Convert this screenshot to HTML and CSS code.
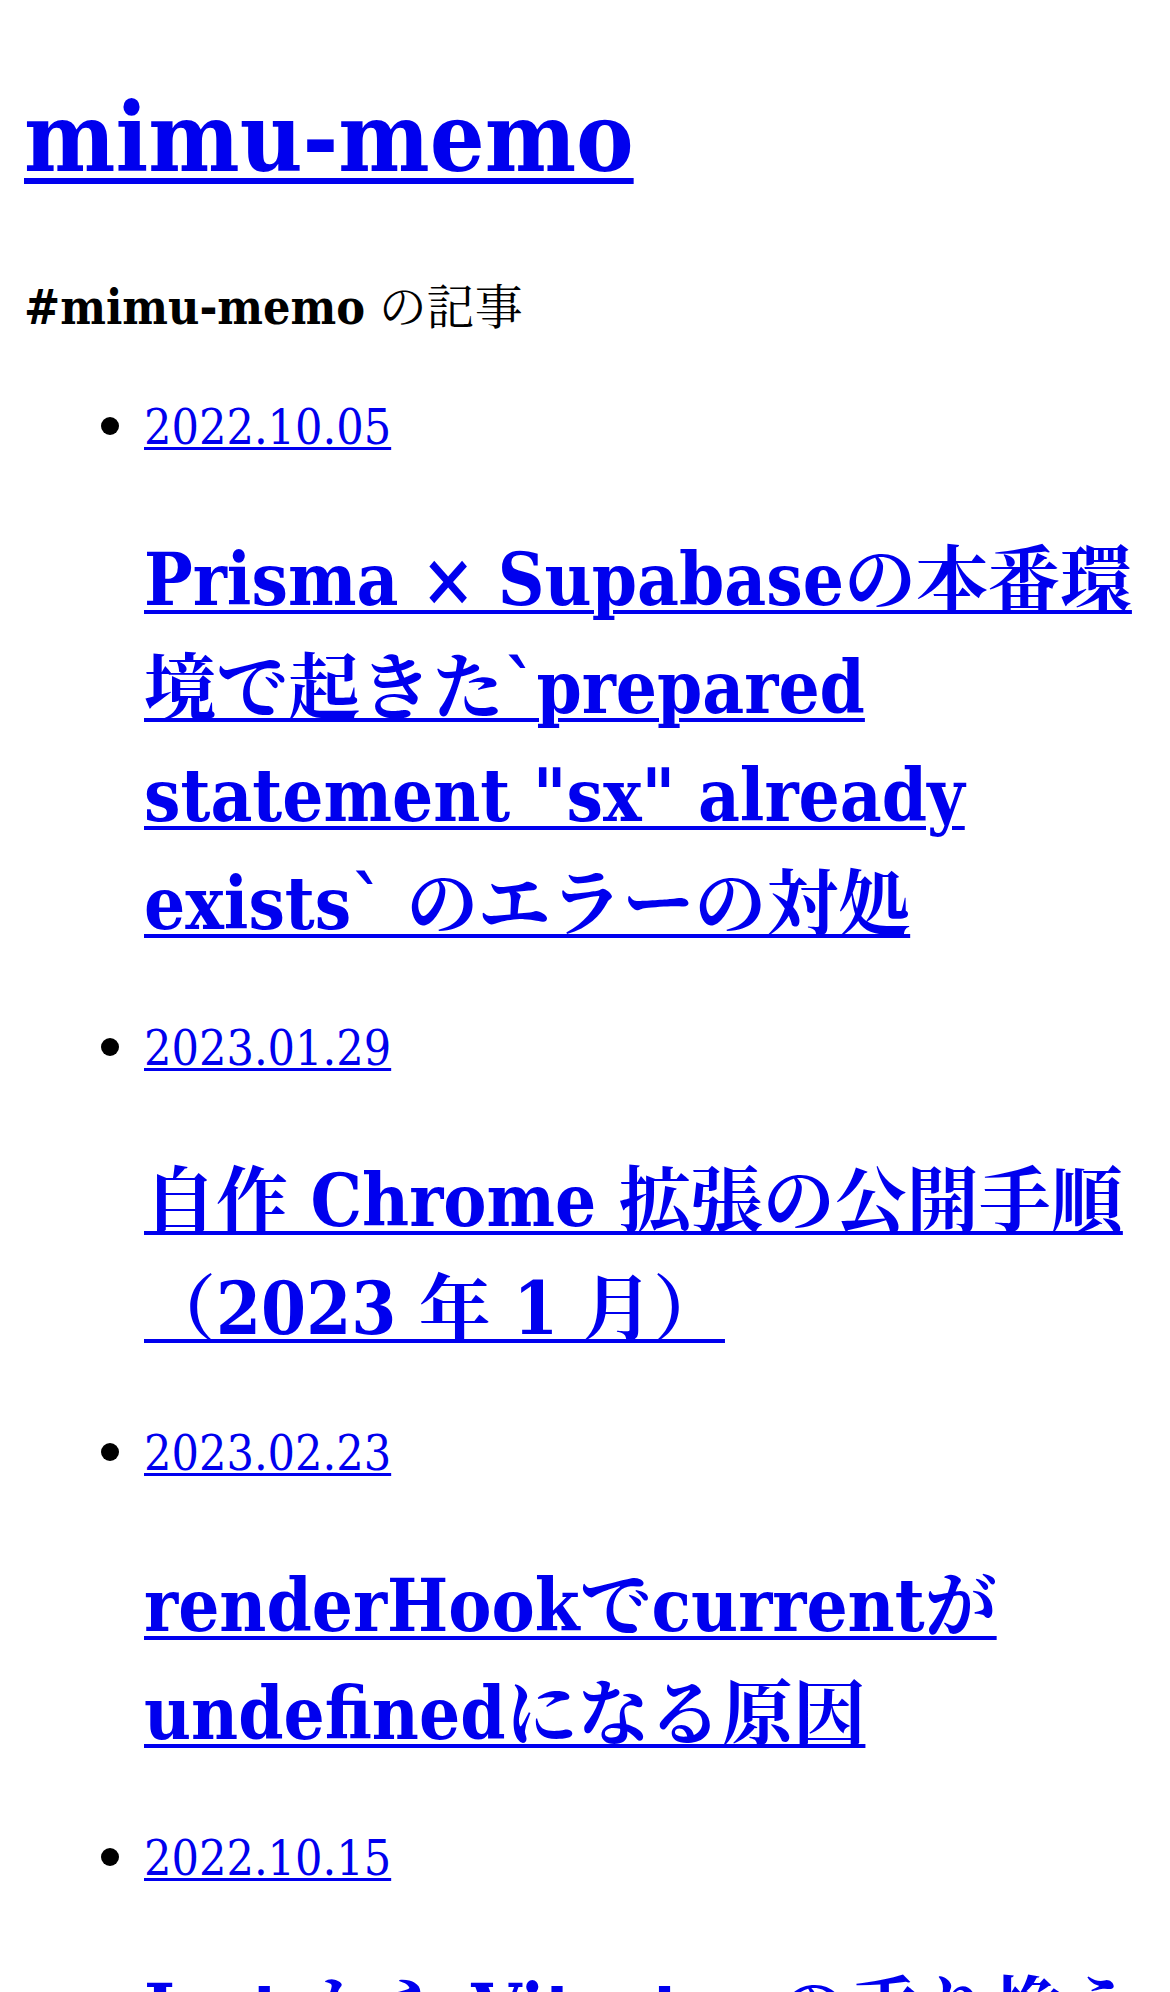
FILE: index.html
```html
<!DOCTYPE html>
<html lang="ja">
<head>
<meta charset="utf-8">
<title>mimu-memo</title>
<link rel="stylesheet" href="styles.css">
</head>
<body>
<div class="page">
  <header class="site-header">
    <h1 class="site-title"><a href="#">mimu-memo</a></h1>
  </header>
  <main>
    <p class="tag-heading"><strong>#mimu-memo</strong> の記事</p>
    <ul class="post-list">
      <li class="post"><a class="post-date" href="#">2022.10.05</a>
        <h2 class="post-title"><a href="#">Prisma × Supabaseの本番環境で起きた`prepared statement "sx" already exists` のエラーの対処</a></h2>
      </li>
      <li class="post"><a class="post-date" href="#">2023.01.29</a>
        <h2 class="post-title"><a href="#">自作 Chrome 拡張の公開手順（2023 年 1 月）</a></h2>
      </li>
      <li class="post"><a class="post-date" href="#">2023.02.23</a>
        <h2 class="post-title"><a href="#">renderHookでcurrentがundefinedになる原因</a></h2>
      </li>
      <li class="post"><a class="post-date" href="#">2022.10.15</a>
        <h2 class="post-title"><a href="#">Jest から Vitest への乗り換え</a></h2>
      </li>
    </ul>
  </main>
</div>
</body>
</html>
```
FILE: styles.css
```css
html {
  font-family: "DejaVu Serif Condensed", "DejaVu Serif", "Noto Serif CJK JP", "Noto Sans CJK JP", serif;
  font-stretch: semi-condensed;
  color: #000;
  background: #fff;
}
body {
  margin: 0;
  font-size: 48px;
}
.page {
  padding: 0 24px;
}
a {
  color: #0000ee;
  text-decoration: underline;
  text-decoration-thickness: 0.06em;
  text-underline-offset: 0.07em;
}
.site-title {
  font-size: 96px;
  font-weight: bold;
  line-height: normal;
  margin: 81px 0 75px;
}
.tag-heading {
  font-size: 48px;
  font-weight: normal;
  line-height: normal;
  margin: 0 0 58px;
}
.tag-heading strong {
  font-weight: bold;
}
.post-list {
  margin: 0;
  padding-left: 120px;
  list-style: disc outside;
}
.post {
  line-height: 56px;
}
.post::marker {
  font-family: "Noto Serif CJK JP", "Noto Sans CJK JP", "DejaVu Serif", serif;
}
.post-title {
  font-size: 72px;
  font-weight: bold;
  line-height: 108px;
  margin: 71px 0 59px;
}
```
